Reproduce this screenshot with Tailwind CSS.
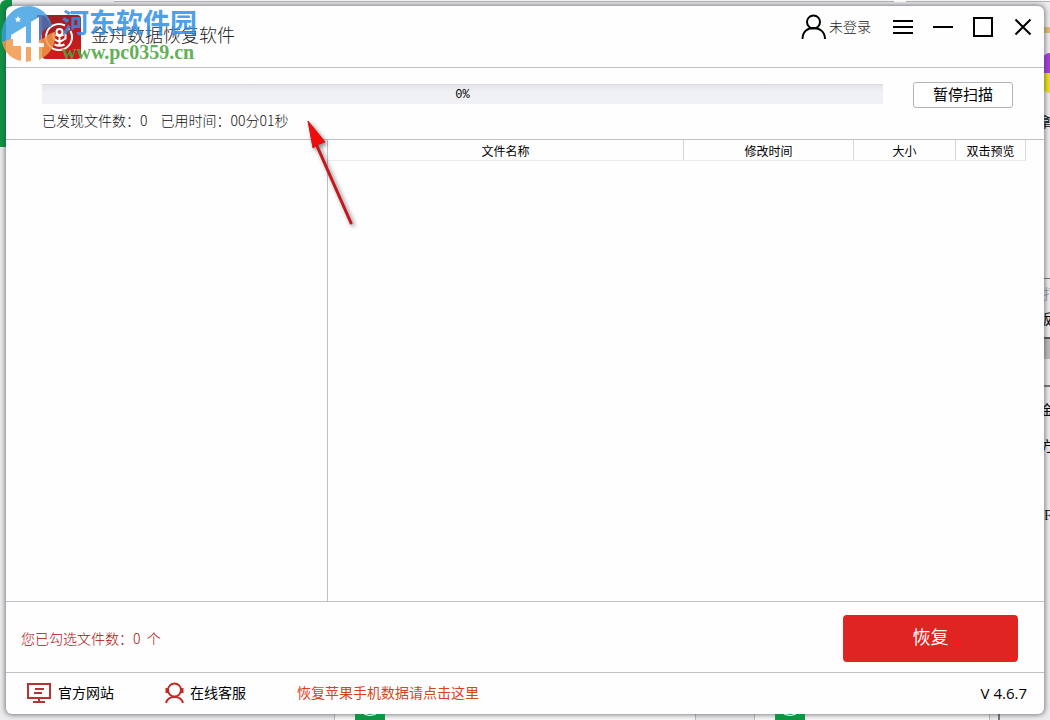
<!DOCTYPE html>
<html lang="zh-CN">
<head>
    <meta charset="UTF-8">
    <meta name="viewport" content="width=device-width, initial-scale=1.0">
    <title>金舟数据恢复软件</title>
    <script src="https://cdn.jsdelivr.net/npm/@tailwindcss/browser@4"></script>
</head>
<body class="relative h-screen overflow-hidden bg-[#ececee] p-[6px] font-['Noto_Sans_CJK_SC',sans-serif] text-black">

    <!-- Desktop behind the window -->
    <div class="absolute inset-0 overflow-hidden text-sm" aria-hidden="true">
        <div class="absolute left-0 top-0 h-[147px] w-3 rounded-tl-md bg-[#0d9444]"></div>
        <div class="absolute left-[114px] right-0 top-0 h-[2px] border-b border-[#b5b5b8] bg-[#f8f8f8]"></div>
        <div class="absolute left-[894px] top-0 h-[2px] w-3 bg-white"></div>
        <div class="absolute right-0 top-[27px] h-[6px] w-2 bg-[#e0bf68]"></div>
        <div class="absolute right-0 top-[53px] h-5 w-2 rounded-tl-lg bg-[#a63be0]"></div>
        <div class="absolute right-0 top-[73px] h-5 w-2 rounded-bl-lg bg-[#ece312]"></div>
        <div class="absolute left-[1038px] top-[111px]">拿</div>
        <div class="absolute right-0 top-[278px] h-px w-2 bg-[#777]"></div>
        <div class="absolute left-[1043px] top-[283px] text-gray-400">打</div>
        <div class="absolute left-[1038px] top-[308px]">版</div>
        <div class="absolute right-0 top-[337px] h-[22px] w-2 border-t-2 border-[#555] bg-[#bbb]"></div>
        <div class="absolute right-0 top-[385px] h-[2px] w-2 bg-[#777]"></div>
        <div class="absolute left-[1040px] top-[399px]">金</div>
        <div class="absolute left-[1040px] top-[435px]">方</div>
        <div class="absolute left-[1044px] top-[506px] font-['Liberation_Serif',serif]">F</div>
        <div class="absolute bottom-0 left-[334px] h-2 w-[362px] border-x border-[#bbb] bg-[#f8f8f8]"></div>
        <div class="absolute bottom-0 left-[754px] h-2 w-[236px] border-x border-[#bbb] bg-[#f8f8f8]"></div>
        <div class="absolute bottom-0 left-[998px] h-2 w-[2px] bg-[#777]"></div>
    </div>

    <!-- Window -->
    <div class="relative flex h-full flex-col overflow-hidden rounded-md bg-[#fefefe] shadow-[0_0_5px_1px_rgba(60,60,70,0.65)]">

        <header class="flex h-[62px] shrink-0 items-start border-b border-[#c0c0c4] pl-9 pr-[11px]">
            <svg class="mt-[9px] h-11 w-[39px] shrink-0" viewBox="0 0 39 44" fill="none">
                <defs>
                    <linearGradient id="logoRed" x1="0" y1="0" x2="0" y2="1">
                        <stop offset="0" stop-color="#9c2024"/>
                        <stop offset="1" stop-color="#d31a1a"/>
                    </linearGradient>
                </defs>
                <rect width="39" height="44" rx="4" fill="url(#logoRed)"/>
                <path d="M23 10.500A13 13 0 1 0 28.500 16" stroke="#fff" stroke-width="2"/>
                <path d="M26 13.500l1.500 1.500" stroke="#fff" stroke-width="2"/>
                <path d="M11.500 18.500v5l6 3.500 6-3.500v-5M17.500 21v9M13.500 19.500l4 2 4-2M12.500 29.500c3 1.500 7 1.500 10 0" stroke="#fff" stroke-width="2"/>
                <circle cx="17.500" cy="17" r="3" stroke="#fff" stroke-width="2"/>
            </svg>
            <h1 class="ml-[10px] mt-[15px] text-lg leading-[26px] font-light text-[#222]">金舟数据恢复软件</h1>
            <div class="ml-auto mt-2 flex items-center">
                <button class="flex items-center gap-[2px] text-sm leading-4 font-light text-[#222]">
                    <svg class="h-[26px] w-[26px]" viewBox="0 0 26 26" fill="none" stroke="#000" stroke-width="2">
                        <circle cx="12.500" cy="8" r="6.500"/>
                        <path d="M1.500 25c0-7 4.500-11 11-11s11.500 4 11.500 11"/>
                    </svg>
                    <span class="pb-[2px]">未登录</span>
                </button>
                <button class="ml-[22px]" aria-label="菜单">
                    <svg class="size-5" viewBox="0 0 20 20" stroke="#000" stroke-width="2"><path d="M0 4h20M0 10h20M0 16h20"/></svg>
                </button>
                <button class="ml-5" aria-label="最小化">
                    <svg class="size-5" viewBox="0 0 20 20" stroke="#000" stroke-width="2"><path d="M0 10h20"/></svg>
                </button>
                <button class="ml-5" aria-label="最大化">
                    <svg class="size-5" viewBox="0 0 20 20" fill="none" stroke="#000" stroke-width="2"><path d="M1 1h18v18H1z"/></svg>
                </button>
                <button class="ml-5" aria-label="关闭">
                    <svg class="size-5" viewBox="0 0 20 20" stroke="#000" stroke-width="2"><path d="M2.500 2.500l15 15M17.500 2.500l-15 15"/></svg>
                </button>
            </div>
        </header>

        <section class="flex h-[72px] shrink-0 items-start border-b border-[#c0c0c4] pl-9 pr-[31px]">
            <div class="mt-4 flex-1">
                <div class="h-5 border-t border-[#dcdcdf] bg-linear-to-b from-[#e6e6e9] to-[#f0f1f5] to-40% text-center font-['Liberation_Mono',monospace] text-xs leading-5" role="progressbar" aria-label="扫描进度" aria-valuenow="0">0%</div>
                <p class="mt-[6px] flex gap-[13px] text-sm leading-5 font-light text-[#111]">
                    <span>已发现文件数：0</span>
                    <span>已用时间：00分01秒</span>
                </p>
            </div>
            <button class="ml-[30px] mt-[14px] h-[26px] w-[100px] rounded-[3px] border border-[#b4b4b8] bg-white pb-[2px] text-[15px] leading-[22px]">暂停扫描</button>
        </section>

        <main class="flex min-h-0 flex-1">
            <aside class="w-[322px] shrink-0 border-r border-[#c0c0c4]"></aside>
            <div class="flex-1 pr-[18px]">
                <table class="w-full table-fixed border-separate border-spacing-0 text-xs">
                    <thead>
                        <tr class="h-[21px] *:border-b *:border-r *:border-[#d8d8da] *:border-b-[#ececee] *:p-0 *:pt-[2px] *:font-normal *:leading-4">
                            <th>文件名称</th>
                            <th class="w-[170px]">修改时间</th>
                            <th class="w-[102px]">大小</th>
                            <th class="w-[70px]">双击预览</th>
                        </tr>
                    </thead>
                    <tbody></tbody>
                </table>
            </div>
        </main>

        <section class="flex h-[72px] shrink-0 items-center justify-between border-y border-[#c0c0c4] pl-[15px] pr-[26px]">
            <p class="pt-[2px] text-sm font-light text-[#a80d0a]">您已勾选文件数：0 &nbsp;个</p>
            <button class="mt-[2px] h-[47px] w-[175px] rounded bg-[#df2421] pb-1 text-lg text-white">恢复</button>
        </section>

        <footer class="flex h-[41px] shrink-0 items-center pb-[2px] pl-[21px] pr-[17px] text-sm">
            <a href="#" class="flex items-center gap-[7px]">
                <svg class="h-[22px] w-6" viewBox="0 0 24 22" fill="none" stroke="#b83232" stroke-width="2">
                    <path d="M1 2h22v14H1zM8 7h9M7 11h8M12 16v4M6 20h12"/>
                </svg>
                <span class="pb-[2px]">官方网站</span>
            </a>
            <a href="#" class="ml-[51px] flex items-center gap-[5px]">
                <svg class="h-[22px] w-5" viewBox="0 0 20 22" fill="none" stroke="#c42a28" stroke-width="2">
                    <circle cx="9.500" cy="8" r="6.500"/>
                    <path d="M2 6v5M17 6v5" stroke-width="3"/>
                    <path d="M1 21c1-4 4-6 8.500-6s7.500 2 8.500 6"/>
                </svg>
                <span class="pb-[2px]">在线客服</span>
            </a>
            <a href="#" class="ml-[51px] pb-[2px] text-[#d8431f]">恢复苹果手机数据请点击这里</a>
            <span class="ml-auto pt-[2px] font-['Open_Sans',sans-serif] text-[15px]">V 4.6.7</span>
        </footer>
    </div>

    <!-- Green app icons cut off by the lower screen edge -->
    <div class="absolute bottom-0 left-[355px] flex h-[6px] w-[30px] justify-center overflow-hidden bg-[#0d9444]"><span class="-mt-6 size-[26px] shrink-0 rounded-full border border-white"></span></div>
    <div class="absolute bottom-0 left-[775px] flex h-[6px] w-[30px] justify-center overflow-hidden bg-[#0d9444]"><span class="-mt-6 size-[26px] shrink-0 rounded-full border border-white"></span></div>

    <!-- Site watermark -->
    <div class="pointer-events-none absolute left-0 top-[5px] flex">
        <svg class="h-[58px] w-[60px]" viewBox="0 5 60 58">
            <path d="M2 43C-1 22 11 6 28 6c12 0 21 8 24 20-6 1-10 5-11 10v4H39V18l-8 4v21H26V27L11 36v3Z" fill="#3b9fe0" fill-opacity=".82"/>
            <path d="M37 15h6q6 5 8 12-6 1-9 6v10h-5Z" fill="#5a3f86" fill-opacity=".5"/>
            <path d="M2 42l9-3h2v7h8v15C11 59 4 52 2 42ZM26 47h5v14l-5 1ZM39 40c6-1 9-7 16-8 2 11-4 22-16 28Z" fill="#f0984a" fill-opacity=".85"/>
            <path d="M11 35 26 26V61h-5V33L11 38ZM31 22 39 17V60l-4 1V24l-4 2ZM26 43h9v4h-9ZM39 43h5v4h-5Z" fill="#fff" fill-opacity=".92"/>
            <path d="m18 16 1 2.200 2.200.300-1.700 1.500.500 2.300-2-1.200-2 1.200.500-2.300-1.700-1.500 2.200-.3z" fill="#fff"/>
        </svg>
        <div class="ml-[2px]">
            <div class="text-[27px] leading-[34px] font-bold text-[#2f8fe3]/85">河东软件园</div>
            <div class="pt-[2px] font-['Liberation_Serif',serif] text-xl leading-[22px] font-bold text-[#4ca63f]/90">www.pc0359.cn</div>
        </div>
    </div>

    <!-- Pointer arrow over the scan status -->
    <svg class="pointer-events-none absolute left-[300px] top-[114px] h-[120px] w-16 drop-shadow-[2px_2px_2px_rgba(0,0,0,0.5)]" viewBox="0 0 64 120">
        <path d="M17 32 51 109" stroke="#c5161c" stroke-width="3" stroke-linecap="round"/>
        <path d="M8 7 25 28 19 30 13 34Z" fill="#f50a0a" stroke="#c5161c"/>
    </svg>
</body>
</html>
